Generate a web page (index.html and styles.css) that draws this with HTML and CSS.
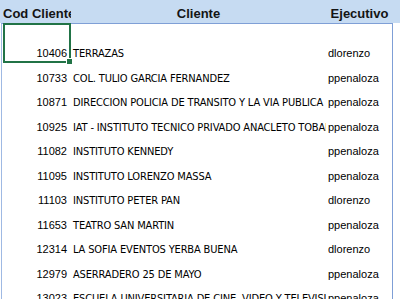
FILE: index.html
```html
<!DOCTYPE html>
<html lang="es">
<head>
<meta charset="utf-8">
<title>Clientes</title>
<link rel="stylesheet" href="styles.css">
</head>
<body>
<div class="sheet">
  <div class="head">
    <div class="hc ha">Cod Cliente</div>
    <div class="hc hb">Cliente</div>
    <div class="hc hc3">Ejecutivo</div>
  </div>
  <div class="grid">
    <div class="row first"><div class="num">10406</div><div class="name">TERRAZAS</div><div class="ejec">dlorenzo</div></div>
    <div class="row"><div class="num">10733</div><div class="name">COL. TULIO GARCIA FERNANDEZ</div><div class="ejec">ppenaloza</div></div>
    <div class="row"><div class="num">10871</div><div class="name">DIRECCION POLICIA DE TRANSITO Y LA VIA PUBLICA</div><div class="ejec">ppenaloza</div></div>
    <div class="row"><div class="num">10925</div><div class="name">IAT - INSTITUTO TECNICO PRIVADO ANACLETO TOBAR</div><div class="ejec">ppenaloza</div></div>
    <div class="row"><div class="num">11082</div><div class="name">INSTITUTO KENNEDY</div><div class="ejec">ppenaloza</div></div>
    <div class="row"><div class="num">11095</div><div class="name">INSTITUTO LORENZO MASSA</div><div class="ejec">ppenaloza</div></div>
    <div class="row"><div class="num">11103</div><div class="name">INSTITUTO PETER PAN</div><div class="ejec">dlorenzo</div></div>
    <div class="row"><div class="num">11653</div><div class="name">TEATRO SAN MARTIN</div><div class="ejec">ppenaloza</div></div>
    <div class="row"><div class="num">12314</div><div class="name">LA SOFIA EVENTOS YERBA BUENA</div><div class="ejec">dlorenzo</div></div>
    <div class="row"><div class="num">12979</div><div class="name">ASERRADERO 25 DE MAYO</div><div class="ejec">ppenaloza</div></div>
    <div class="row"><div class="num">13023</div><div class="name">ESCUELA UNIVERSITARIA DE CINE, VIDEO Y TELEVISION</div><div class="ejec">ppenaloza</div></div>
  </div>
  <div class="sel"><span class="handle"></span></div>
</div>
</body>
</html>
```

FILE: styles.css
```css
html, body {
  margin: 0;
  padding: 0;
  background: #ffffff;
}
body {
  width: 400px;
  height: 299px;
  overflow: hidden;
  font-family: "Liberation Sans", Arial, sans-serif;
  color: #000;
}
.sheet {
  position: relative;
  width: 400px;
  height: 299px;
  overflow: hidden;
}
.head {
  display: grid;
  grid-template-columns: 68px 255px 67px 1fr;
  height: 23px;
  padding-left: 3px;
  background: #c6dbf2;
  font-weight: bold;
  font-size: 13px;
  color: #141414;
  align-items: end;
}
.hc {
  white-space: nowrap;
  overflow: hidden;
  line-height: 16px;
  padding-bottom: 1px;
}
.ha { text-align: left; }
.hb { text-align: center; }
.hc3 { text-align: center; }
.grid {
  margin-left: 1px;
  width: 389px;
  padding-left: 1px;
  border-left: 1px solid #9fb9e3;
  border-right: 1px solid #7f9fd6;
  border-top: 1px solid #7f9fd6;
  display: flex;
  flex-direction: column;
}
.row {
  display: grid;
  grid-template-columns: 68px 255px 66px;
  height: 24.5px;
  align-items: end;
  font-size: 11px;
  line-height: 15px;
  flex: none;
}
.row.first {
  height: 39px;
}
.row > div {
  white-space: nowrap;
  overflow: hidden;
  padding-bottom: 2px;
}
.num {
  text-align: right;
  padding-right: 4px;
}
.name {
  padding-left: 2px;
  letter-spacing: -0.15px;
  font-family: "Liberation Sans Narrow", "DejaVu Sans Condensed", "Liberation Sans", sans-serif;
}
.ejec {
  padding-left: 2px;
}
.sel {
  position: absolute;
  left: 3px;
  top: 23px;
  width: 68px;
  height: 40px;
  box-sizing: border-box;
  border: 2px solid #217346;
}
.handle {
  position: absolute;
  right: -4px;
  bottom: -4px;
  width: 5px;
  height: 5px;
  background: #217346;
  border: 1px solid #fff;
}
```
